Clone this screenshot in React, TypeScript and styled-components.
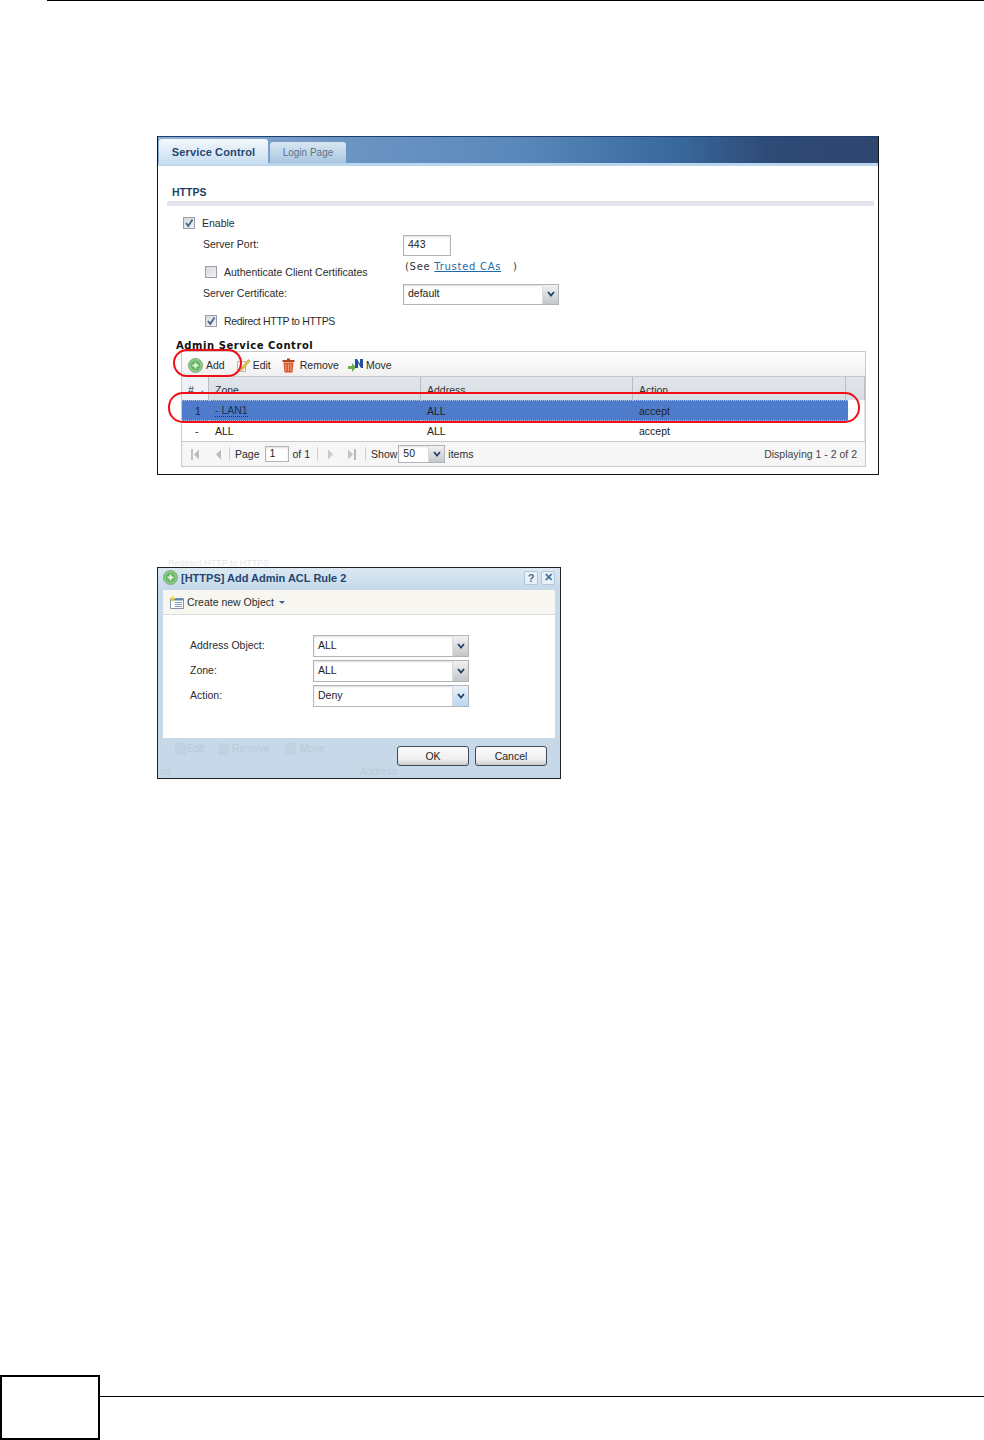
import React from "react";
import styled, { createGlobalStyle } from "styled-components";

const Global = createGlobalStyle`
  html, body { margin: 0; padding: 0; background: #fff; }
`;
const UI = `"Liberation Sans", Arial, sans-serif`;
const WIDE = `"DejaVu Sans", Verdana, sans-serif`;

const Page = styled.div`
  position: relative; width: 984px; height: 1440px; overflow: hidden; background: #fff;
  display: flex; flex-direction: column; font-family: ${UI}; font-size: 10.5px; color: #2b2b2b;
`;
const TopRule = styled.div`height: 1px; margin-left: 47px; background: #000;`;

/* ---------- Service control figure ---------- */
const Shot = styled.section`
  position: relative; box-sizing: border-box; margin: 135px 0 0 157px; width: 722px; height: 339px;
  border: 1px solid #111; border-top-color: #1c3f70; background: #fff;
`;
const TabStrip = styled.div`
  box-sizing: border-box; height: 29px; padding: 2px 0 0 1px; display: flex; gap: 2px; align-items: flex-start;
  background: linear-gradient(90deg, #8fb0d6 0%, #6d95c4 25%, #5a88bb 50%, #38699c 72%, #2e4a76 85%, #2f4670 100%);
  border-bottom: 3px solid #b9d6ee;
`;
const Tab = styled.div<{ $active?: boolean }>`
  box-sizing: border-box; display: flex; align-items: center; justify-content: center; border-radius: 3px 3px 0 0;
  ${p => p.$active
    ? `width: 109px; height: 26px; margin-bottom: -3px; font-weight: 700; color: #24466f; background: linear-gradient(#f4f8fc, #c5dcf1); font-size: 11px; letter-spacing: .15px;`
    : `width: 76px; height: 21px; margin-top: 3px; padding-bottom: 1px; color: #5b7186; background: linear-gradient(#d9e6f2, #a9c6df); font-size: 10px;`}
`;
const Body = styled.div`padding: 20px 4px 0 9px;`;
const SectionTitle = styled.h2`
  margin: 0; padding: 0 0 2px 5px; font: 700 10.5px ${UI}; line-height: 12px; color: #1f3f67;
  border-bottom: 5px solid #e4e4ec; height: 13px;
`;
const Form = styled.div`display: flex; flex-direction: column; margin-top: 6px;`;
const Row = styled.div<{ $h: number; $indent: number; $pt?: number }>`
  box-sizing: border-box; display: flex; align-items: center; height: ${p => p.$h}px;
  padding: ${p => p.$pt ?? 0}px 0 0 ${p => p.$indent}px;
`;
const Check = styled.span`
  box-sizing: border-box; flex: none; width: 12px; height: 12px; margin-right: 7px; display: inline-flex;
  align-items: center; justify-content: center; border: 1px solid #9a9ea6;
  background: linear-gradient(135deg, #d7d9de, #f2f2f4);
`;
const Label = styled.span<{ $w?: number; $tight?: boolean }>`
  white-space: nowrap; ${p => p.$w ? `width: ${p.$w}px; flex: none;` : ""}
  ${p => p.$tight ? "letter-spacing: -.33px;" : ""}
`;
const TextBox = styled.div<{ $w: number; $h?: number; $mt?: number }>`
  box-sizing: border-box; flex: none; width: ${p => p.$w}px; height: ${p => p.$h ?? 21}px; border: 1px solid #b1b5ba;
  margin-top: ${p => p.$mt ?? 0}px; box-shadow: inset 0 1px 2px #ddd; padding: 0 0 2px 4px;
  display: flex; align-items: center; background: #fff; color: #222;
`;
const Combo = styled(TextBox)`position: relative; padding-right: 16px;`;
const ComboBtn = styled.span<{ $hot?: boolean }>`
  position: absolute; right: 0; top: 0; bottom: 0; width: 15px; display: flex; align-items: center; justify-content: center;
  border-left: 1px solid #dcdcdc;
  background: ${p => p.$hot ? "linear-gradient(#e8f2fb, #bcd7f0)" : "linear-gradient(#f1f1f1, #c4c6c8)"};
`;
const Note = styled.span`
  font: 10px ${WIDE}; letter-spacing: .72px; color: #333; white-space: pre; align-self: flex-start; margin: -1px 0 0 2px;
`;
const Link = styled.a`color: #1d6aa8; text-decoration: underline;`;
const GridTitle = styled.h3`
  margin: 2px 0 0 9px; font: 700 10px ${WIDE}; letter-spacing: .55px; line-height: 11px; color: #111; height: 11px;
`;
const Grid = styled.div`
  box-sizing: border-box; margin: 0 8px 0 14px; height: 116px; border: 1px solid #c7c9cc; display: flex; flex-direction: column;
`;
const Toolbar = styled.div`
  flex: none; box-sizing: border-box; height: 24px; display: flex; align-items: center; padding: 2px 0 0 6px;
  background: linear-gradient(#fff, #f0f0f0);
`;
const Tool = styled.span<{ $mr: number; $gap: number }>`
  display: inline-flex; align-items: center; gap: ${p => p.$gap}px; margin-right: ${p => p.$mr}px; white-space: nowrap;
`;
const cols = "27px 212px 212px 213px 1fr";
const HeadRow = styled.div`
  flex: none; display: grid; grid-template-columns: ${cols}; height: 24px; box-sizing: border-box;
  background: linear-gradient(#e1e5ea, #d8dee6); border-top: 1px solid #c4c8cc; color: #333;
`;
const HeadCell = styled.div<{ $sorted?: boolean }>`
  box-sizing: border-box; padding: 6px 0 0 6px; border-right: 1px solid #b9bec6; line-height: 14px;
  ${p => p.$sorted ? "background: #eef1f5; display: flex; gap: 5px;" : ""}
`;
const SortMark = styled.span`color: #5b82b8; font-size: 7px; margin-top: 2px;`;
const DataRow = styled.div`
  flex: none; display: grid; grid-template-columns: ${cols}; height: 20px; align-items: center;
  color: #222; background: #fff;
`;
const SelRow = styled(DataRow)`height: 21px;`;
const Cell = styled.div<{ $center?: boolean; $sel?: boolean }>`
  box-sizing: border-box; height: 100%; display: flex; align-items: center; white-space: nowrap;
  padding-left: ${p => p.$center ? 13 : 6}px;
  ${p => p.$sel ? "background: #4f7cca; border-top: 1px dotted #a9bfe4; border-bottom: 1px dotted #a9bfe4;" : ""}
`;
const SelEnd = styled(Cell)`margin-right: -2px;`;
const Gutter = styled.div`border-right: 1px solid #e6e6e6; height: 100%;`;
const ZoneLink = styled.span`border-bottom: 1px dotted #1f3350; color: #1e2f4a;`;
const Pager = styled.div`
  flex: 1; box-sizing: border-box; display: flex; align-items: center; padding: 0 8px 0 7px;
  background: #f6f6f6; border-top: 1px solid #c7c9cc; white-space: nowrap;
`;
const Sep = styled.span<{ $ml: number; $mr: number }>`
  flex: none; width: 1px; height: 14px; background: #d0d0d0; margin: 0 ${p => p.$mr}px 0 ${p => p.$ml}px;
`;
const PagerIcon = styled.svg<{ $mr?: number }>`width: 13px; height: 13px; margin-right: ${p => p.$mr ?? 0}px; flex: none;`;
const PagerText = styled.span<{ $ml?: number; $mr?: number }>`
  margin: 0 ${p => p.$mr ?? 0}px 0 ${p => p.$ml ?? 0}px;
`;
const Displaying = styled.span`margin-left: auto; color: #444;`;
const Oval = styled.div<{ $x: number; $y: number; $w: number; $h: number; $r: number }>`
  position: absolute; box-sizing: border-box; left: ${p => p.$x}px; top: ${p => p.$y}px; width: ${p => p.$w}px; height: ${p => p.$h}px;
  border: 2px solid #f00f14; border-radius: ${p => p.$r}px; pointer-events: none;
`;

/* ---------- Dialog figure ---------- */
const Dialog = styled.section`
  position: relative; box-sizing: border-box; margin: 92px 0 0 157px; width: 404px; height: 212px; border: 1px solid #222;
  background: #c7d9e8; display: flex; flex-direction: column;
`;
const DialogHead = styled.div`
  flex: none; height: 21px; box-sizing: border-box; padding: 0 5px 2px; display: flex; align-items: center; gap: 3px;
  background: linear-gradient(#dbe8f3, #c6d9e9);
`;
const DialogTitle = styled.span`flex: 1; font: 700 11px ${UI}; color: #24466f; white-space: nowrap;`;
const HeadBtn = styled.span`
  box-sizing: border-box; width: 14px; height: 14px; display: flex; align-items: center; justify-content: center;
  background: #e9f1f8; border: 1px solid #b3c6d8; border-radius: 2px; color: #3b6ea5; font: 700 11px ${UI};
`;
const DialogFrame = styled.div`flex: none; margin: 1px 5px 0; background: #fff; height: 148px; display: flex; flex-direction: column;`;
const DialogBar = styled.div`
  flex: none; box-sizing: border-box; height: 25px; padding: 0 6px; display: flex; align-items: center; gap: 3px;
  background: #f8f6f1; border-bottom: 1px solid #dcdcdc;
`;
const Caret = styled.span`width: 0; height: 0; border: 3px solid transparent; border-top: 3px solid #44618a; margin: 3px 0 0 2px;`;
const DialogForm = styled.div`padding: 20px 0 0 27px; display: flex; flex-direction: column; gap: 3px;`;
const DialogRow = styled.div`display: flex; align-items: center; height: 22px;`;
const DialogLabel = styled.span`width: 123px; flex: none; margin-bottom: 2px;`;
const Footer = styled.div`position: relative; flex: 1; display: flex; justify-content: flex-end; gap: 6px; padding: 8px 13px 0 0;`;
const Button = styled.div`
  position: relative; box-sizing: border-box; width: 72px; height: 20px; border: 1px solid #3f4a55; border-radius: 3px; display: flex; align-items: center; justify-content: center;
  background: linear-gradient(#fafafa 0%, #f0f0f0 65%, #c9ccd0 100%); color: #222;
`;
const Ghost = styled.span<{ $x: number; $y: number }>`
  position: absolute; left: ${p => p.$x}px; top: ${p => p.$y}px; color: #b6c9da; font-size: 10px; white-space: nowrap; line-height: 10px;
`;
const GhostIcon = styled.span<{ $x: number }>`
  position: absolute; left: ${p => p.$x}px; top: 5px; width: 11px; height: 12px; background: #c0d2e1;
`;
const GhostAbove = styled.span`
  position: absolute; left: 10px; top: -9px; font-size: 9px; line-height: 9px; color: #e4e7ea; white-space: nowrap;
`;

/* ---------- Page footer ---------- */
const PageFoot = styled.footer`position: absolute; left: 0; right: 0; bottom: 0; height: 65px;`;
const FootBox = styled.div`box-sizing: border-box; width: 100px; height: 65px; border: 2px solid #000;`;
const FootRule = styled.div`position: absolute; left: 100px; right: 0; top: 21px; height: 1px; background: #000;`;

const Arrow = ({ c = "#24416b" }: { c?: string }) => (
  <svg width="8" height="6" viewBox="0 0 8 6"><path d="M1 1 4 4.500 7 1" fill="none" stroke={c} strokeWidth="1.800" /></svg>
);
const Tick = () => (
  <svg width="10" height="10" viewBox="0 0 10 10"><path d="M2 5 4.300 8 8.500 1.500" fill="none" stroke="#46618f" strokeWidth="1.800" /></svg>
);
const AddIcon = () => (
  <svg width="15" height="15" viewBox="0 0 15 15">
    <circle cx="7.500" cy="7.500" r="7" fill="#8cc78a" stroke="#7fae80" />
    <circle cx="7.500" cy="7.500" r="4.600" fill="#5fb35f" />
    <path d="M7.500 4.500v6M4.500 7.500h6" stroke="#e6f6e2" strokeWidth="1.800" />
  </svg>
);
const EditIcon = () => (
  <svg width="15" height="15" viewBox="0 0 15 15">
    <path d="M1.500 3.500h8v10h-8z" fill="#f8f6ea" stroke="#b5b5a8" />
    <path d="M5 10.500 12.500 1.500 14 3 6.500 11.800 4.500 12.500z" fill="#f0c640" stroke="#a98a2c" strokeWidth=".6" />
  </svg>
);
const TrashIcon = () => (
  <svg width="13" height="15" viewBox="0 0 13 15">
    <path d="M5 .5h3v1.500H5zM.5 2h12v2H.5z" fill="#b4441d" />
    <path d="M1.500 4.500h10l-1 10h-8z" fill="#d9582c" />
    <path d="M4 6v7M6.500 6v7M9 6v7" stroke="#efa184" />
  </svg>
);
const MoveIcon = () => (
  <svg width="16" height="14" viewBox="0 0 16 14">
    <path d="M0 8h4V5l4 4.500-4 4.500v-3H0z" fill="#6cae4f" />
    <path d="M7 10V1h2l3 5V1h3v9h-2l-3-5v5z" fill="#234f9e" />
  </svg>
);
const CreateIcon = () => (
  <svg width="15" height="14" viewBox="0 0 15 14">
    <path d="M1.500 3.500h13v10h-13z" fill="#fff" stroke="#7f93ad" />
    <path d="M2 3.500h12v2H2z" fill="#5d84b8" />
    <path d="M6 7.500h7M6 9.500h7M6 11.500h7" stroke="#7f9cc0" />
    <path d="M3.500 0 4.500 2.500 7 3.500 4.500 4.500 3.500 7 2.500 4.500 0 3.500 2.500 2.500z" fill="#f2d33c" />
  </svg>
);
const First = () => <PagerIcon viewBox="0 0 13 13" $mr={10}><path d="M2 1h2v11H2z" fill="#bfc3c8" /><path d="M10 1.500v10L5 6.500z" fill="#b8bcc0" /></PagerIcon>;
const Prev = () => <PagerIcon viewBox="0 0 13 13"><path d="M9 1.500v10L4 6.500z" fill="#b8bcc0" /></PagerIcon>;
const Next = () => <PagerIcon viewBox="0 0 13 13" $mr={8}><path d="M4 1.500v10L9 6.500z" fill="#c8ccd0" /></PagerIcon>;
const Last = () => <PagerIcon viewBox="0 0 13 13"><path d="M3 1.500v10L8 6.500z" fill="#c0c4c8" /><path d="M9 1h2v11H9z" fill="#b4b8bc" /></PagerIcon>;

export default function App() {
  return (
    <Page>
      <Global />
      <TopRule />
      <Shot>
        <TabStrip>
          <Tab $active>Service Control</Tab>
          <Tab>Login Page</Tab>
        </TabStrip>
        <Body>
          <SectionTitle>HTTPS</SectionTitle>
          <Form>
            <Row $h={22} $indent={16}><Check><Tick /></Check><Label>Enable</Label></Row>
            <Row $h={20} $indent={36}><Label $w={200}>Server Port:</Label><TextBox $w={48} $mt={2}>443</TextBox></Row>
            <Row $h={28} $indent={38} $pt={8}>
              <Check />
              <Label $w={179}>Authenticate Client Certificates</Label>
              <Note>(See <Link>Trusted CAs</Link>   )</Note>
            </Row>
            <Row $h={22} $indent={36}>
              <Label $w={200}>Server Certificate:</Label>
              <Combo $w={156} $mt={2}>default<ComboBtn><Arrow /></ComboBtn></Combo>
            </Row>
            <Row $h={34} $indent={38}><Check><Tick /></Check><Label $tight>Redirect HTTP to HTTPS</Label></Row>
          </Form>
          <GridTitle>Admin Service Control</GridTitle>
          <Grid>
            <Toolbar>
              <Tool $mr={11} $gap={3}><AddIcon />Add</Tool>
              <Tool $mr={11} $gap={2}><EditIcon />Edit</Tool>
              <Tool $mr={9} $gap={5}><TrashIcon />Remove</Tool>
              <Tool $mr={0} $gap={2}><MoveIcon />Move</Tool>
            </Toolbar>
            <HeadRow>
              <HeadCell $sorted>#<SortMark>▲</SortMark></HeadCell>
              <HeadCell>Zone</HeadCell>
              <HeadCell>Address</HeadCell>
              <HeadCell>Action</HeadCell>
              <HeadCell />
            </HeadRow>
            <SelRow>
              <Cell $center $sel>1</Cell>
              <Cell $sel><ZoneLink>- LAN1</ZoneLink></Cell>
              <Cell $sel>ALL</Cell>
              <SelEnd $sel>accept</SelEnd>
              <Gutter />
            </SelRow>
            <DataRow>
              <Cell $center>-</Cell>
              <Cell>ALL</Cell>
              <Cell>ALL</Cell>
              <Cell>accept</Cell>
              <Gutter />
            </DataRow>
            <Pager>
              <First /><Prev /><Sep $ml={4} $mr={5} />
              <PagerText $mr={5}>Page</PagerText>
              <TextBox $w={24} $h={16}>1</TextBox>
              <PagerText $ml={4}>of 1</PagerText>
              <Sep $ml={7} $mr={6} />
              <Next /><Last /><Sep $ml={7} $mr={5} />
              <PagerText $mr={1}>Show</PagerText>
              <Combo $w={47} $h={18}>50<ComboBtn><Arrow /></ComboBtn></Combo>
              <PagerText $ml={3}>items</PagerText>
              <Displaying>Displaying 1 - 2 of 2</Displaying>
            </Pager>
          </Grid>
        </Body>
        <Oval $x={15} $y={212} $w={69} $h={28} $r={14} />
        <Oval $x={10} $y={255} $w={692} $h={31} $r={15} />
      </Shot>
      <Dialog>
        <GhostAbove>Redirect HTTP to HTTPS</GhostAbove>
        <DialogHead>
          <AddIcon />
          <DialogTitle>[HTTPS] Add Admin ACL Rule 2</DialogTitle>
          <HeadBtn>?</HeadBtn>
          <HeadBtn>✕</HeadBtn>
        </DialogHead>
        <DialogFrame>
          <DialogBar><CreateIcon />Create new Object<Caret /></DialogBar>
          <DialogForm>
            <DialogRow><DialogLabel>Address Object:</DialogLabel><Combo $w={156} $h={22}>ALL<ComboBtn><Arrow /></ComboBtn></Combo></DialogRow>
            <DialogRow><DialogLabel>Zone:</DialogLabel><Combo $w={156} $h={22}>ALL<ComboBtn><Arrow /></ComboBtn></Combo></DialogRow>
            <DialogRow><DialogLabel>Action:</DialogLabel><Combo $w={156} $h={22}>Deny<ComboBtn $hot><Arrow /></ComboBtn></Combo></DialogRow>
          </DialogForm>
        </DialogFrame>
        <Footer>
          <GhostIcon $x={17} />
          <Ghost $x={29} $y={6}>Edit</Ghost>
          <GhostIcon $x={60} />
          <Ghost $x={74} $y={6}>Remove</Ghost>
          <GhostIcon $x={127} />
          <Ghost $x={142} $y={6}>Move</Ghost>
          <Ghost $x={2} $y={29}>ne</Ghost>
          <Ghost $x={202} $y={29}>Address</Ghost>
          <Button>OK</Button>
          <Button>Cancel</Button>
        </Footer>
      </Dialog>
      <PageFoot>
        <FootBox />
        <FootRule />
      </PageFoot>
    </Page>
  );
}
